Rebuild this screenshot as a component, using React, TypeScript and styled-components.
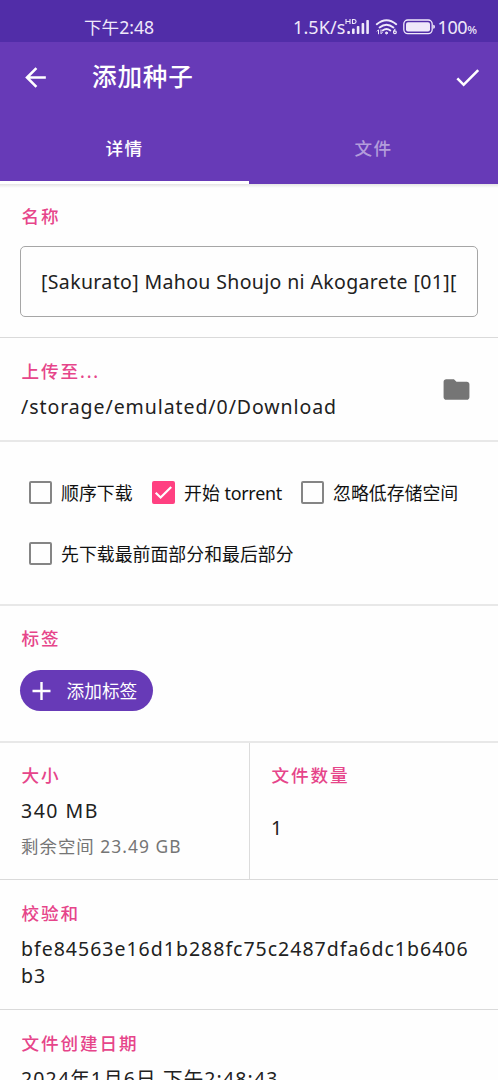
import React from "react";
import styled, { createGlobalStyle } from "styled-components";

const GlobalStyle = createGlobalStyle`
  * { box-sizing: border-box; }
  body {
    margin: 0;
    background: #fefefe;
    font-family: "Noto Sans", "Noto Sans CJK SC", sans-serif;
    color: #212121;
  }
`;

const Screen = styled.div`
  display: flex;
  flex-direction: column;
  width: 498px;
  height: 1080px;
  overflow: hidden;
`;

const StatusBar = styled.div`
  display: flex;
  flex: none;
  align-items: center;
  justify-content: space-between;
  height: 42px;
  padding: 12px 21px 0 84px;
  background: #512da8;
  color: #efe9fa;
  font-size: 18px;
  line-height: 28px;
`;

const Clock = styled.span`
  font-size: 17.6px;
`;

const StatusItems = styled.div`
  display: flex;
  align-items: center;
  height: 28px;
  white-space: nowrap;
`;

const StatusIcons = styled.div`
  display: flex;
  gap: 4px;
  padding: 1px 2px 0 0;
`;

const StatusText = styled.span<{ $spacing?: number }>`
  font-size: 18px;
  letter-spacing: ${(p) => p.$spacing ?? 0}px;
`;

const Percent = styled.small`
  font-size: 11.5px;
  font-weight: 500;
  padding-top: 5px;
`;

const Header = styled.header`
  flex: none;
  height: 142px;
  background: #673ab7;
  color: #fff;
`;

const Toolbar = styled.div`
  display: flex;
  align-items: center;
  height: 70px;
  padding: 0 15px 0 20px;
`;

const Title = styled.h1`
  flex: 1;
  margin: 0 0 0 41px;
  font-size: 24.6px;
  font-weight: 500;
  line-height: 36px;
  letter-spacing: 0.8px;
`;

const Tabs = styled.div`
  display: flex;
  height: 72px;
`;

const Tab = styled.div<{ $active?: boolean }>`
  display: flex;
  flex: 1;
  align-items: center;
  justify-content: center;
  padding-top: 1px;
  border-bottom: 3px solid ${(p) => (p.$active ? "#fff" : "transparent")};
  color: ${(p) => (p.$active ? "#fff" : "#b39ddb")};
  font-size: 17.6px;
  font-weight: 500;
  letter-spacing: 1.5px;
`;

const Section = styled.section<{ $height: number; $top?: number; $thick?: boolean }>`
  flex: none;
  height: ${(p) => p.$height}px;
  padding: ${(p) => p.$top ?? 20}px 20px 0 21px;
  border-bottom: ${(p) => (p.$thick ? "2px solid #e8e8e8" : "1px solid #dadada")};
`;

const Shade = styled.div`
  flex: none;
  height: 4px;
  margin-bottom: -4px;
  background: linear-gradient(#e4e4e4, #fefefe);
`;

const Label = styled.h2`
  margin: 0;
  padding-left: 0.5px;
  color: #e6458a;
  font-size: 17.6px;
  font-weight: 500;
  line-height: 26px;
  letter-spacing: 1.9px;
`;

const Value = styled.p<{ $spacing?: number; $gap?: number }>`
  margin: ${(p) => p.$gap ?? 9}px 0 0;
  font-size: 19.5px;
  line-height: 27px;
  letter-spacing: ${(p) => p.$spacing ?? 1}px;
  white-space: pre;
`;

const Hint = styled.p`
  margin: 9px 0 0;
  color: #757575;
  font-size: 17.4px;
  line-height: 26px;
  letter-spacing: 1.05px;
`;

const Field = styled.div`
  display: flex;
  align-items: center;
  height: 71px;
  margin: 17px 0 0 -1px;
  padding: 0 19px 1px 20px;
  border: 1px solid #a6a6a6;
  border-radius: 5px;
  font-size: 19.5px;
  letter-spacing: 0.36px;
  white-space: nowrap;
  overflow: hidden;
`;

const PathRow = styled.div`
  display: flex;
  justify-content: space-between;
`;

const FolderSlot = styled.div`
  padding: 16px 6px 0 0;
`;

const CheckRow = styled.div`
  display: flex;
  height: 61px;
  padding-left: 8px;
`;

const CheckItem = styled.div<{ $width: number }>`
  display: flex;
  align-items: center;
  gap: 9px;
  width: ${(p) => p.$width}px;
  color: #111;
  font-size: 17.9px;
  line-height: 26px;
  white-space: nowrap;
`;

const Latin = styled.span`
  letter-spacing: -0.25px;
`;

const Box = styled.span<{ $checked?: boolean }>`
  display: grid;
  flex: none;
  place-items: center;
  width: 23px;
  height: 23px;
  border: 2px solid ${(p) => (p.$checked ? "#ff4081" : "#858585")};
  border-radius: 2px;
  background: ${(p) => (p.$checked ? "#ff4081" : "transparent")};
`;

const Chip = styled.button`
  display: flex;
  align-items: center;
  gap: 16px;
  width: 133px;
  height: 41px;
  margin: 19px 0 0 -1px;
  padding: 0 0 0 11.5px;
  border: 0;
  border-radius: 21px;
  background: #673ab7;
  color: #fff;
  font-family: inherit;
  font-size: 17.7px;
  line-height: 26px;
  white-space: nowrap;
`;

const Columns = styled.div`
  display: grid;
  flex: none;
  grid-template-columns: 250px 1fr;
`;

const Column = styled(Section)<{ $divided?: boolean }>`
  border-right: ${(p) => (p.$divided ? "1px solid #dcdcdc" : "0")};
`;

const Signal = () => (
  <svg width="26" height="20" viewBox="0 0 26 20" fill="#efe9fa">
    <path d="M1 1v5M5 1v5M1 3.5h4M7.5 1.5v4h1.6q2-.1 2-2t-2-2z" fill="none" stroke="#efe9fa" strokeWidth="1.1" />
    <rect x="2.3" y="13" width="2.6" height="3" rx=".8" />
    <rect x="7" y="10.5" width="2.6" height="5.5" rx=".8" />
    <rect x="11.8" y="8" width="2.6" height="8" rx=".8" />
    <rect x="16.6" y="5" width="2.6" height="11" rx=".8" />
    <rect x="21.3" y="2" width="2.6" height="14" rx=".8" />
  </svg>
);

const Wifi = () => (
  <svg width="23" height="20" viewBox="0 0 23 20" fill="none" stroke="#efe9fa" strokeWidth="1.9" strokeLinecap="round">
    <path d="M1.8 6.2Q11.5-1.8 21.2 6.2M4.6 9.4q6.9-5.5 13.8 0M7.7 12.4q3.8-2.8 7.6 0" />
    <circle cx="11.5" cy="15" r="1" fill="#efe9fa" strokeWidth="1" />
    <path d="M3.5 15.8v-4l-1.3 1.3M6 11.8v4l1.3-1.3" strokeWidth="1" />
    <path d="M20 11.2l-1.3 2.2" strokeWidth="1.1" />
    <circle cx="19.9" cy="14.3" r="1.4" strokeWidth="1.2" />
  </svg>
);

const Battery = () => (
  <svg width="33" height="18" viewBox="0 0 33 18" fill="none">
    <rect x="1.8" y="2" width="28.4" height="13.6" rx="4" stroke="#efe9fa" strokeWidth="1.3" />
    <rect x="4" y="4.2" width="24" height="9.2" rx="2" fill="#efe9fa" />
    <path d="M31.2 6.8q1.8 0 1.8 2t-1.8 2z" fill="#efe9fa" />
  </svg>
);

const BackIcon = () => (
  <svg width="31" height="31" viewBox="0 0 24 24" fill="#fff">
    <path d="M20 11H7.83l5.59-5.59L12 4l-8 8 8 8 1.41-1.41L7.83 13H20z" />
  </svg>
);

const DoneIcon = () => (
  <svg width="31" height="31" viewBox="0 0 24 24" fill="#fff">
    <path d="M9 16.17 4.83 12l-1.42 1.41L9 19 21 7l-1.41-1.41z" />
  </svg>
);

const FolderIcon = () => (
  <svg width="31" height="31" viewBox="0 0 24 24" fill="#757575">
    <path d="M10 4H4c-1.1 0-1.99.9-1.99 2L2 18c0 1.1.9 2 2 2h16c1.1 0 2-.9 2-2V8c0-1.1-.9-2-2-2h-8z" />
  </svg>
);

const PlusIcon = () => (
  <svg width="19" height="18" viewBox="0 0 19 18" stroke="#fff" strokeWidth="2.4">
    <path d="M9.5 0v18M.5 9h18" />
  </svg>
);

type CheckProps = { label: React.ReactNode; width: number; checked?: boolean };

const Check = ({ label, width, checked }: CheckProps) => (
  <CheckItem $width={width}>
    <Box $checked={checked}>
      {checked && (
        <svg width="19" height="19" viewBox="0 0 19 19" fill="none" stroke="#fff" strokeWidth="2.2">
          <path d="M1.7 9.7l4.9 4.8L17.2 4" />
        </svg>
      )}
    </Box>
    <span>{label}</span>
  </CheckItem>
);

export default function App() {
  return (
    <Screen>
      <GlobalStyle />
      <StatusBar>
        <Clock>下午2:48</Clock>
        <StatusItems>
          <StatusText $spacing={0.1}>1.5K/s</StatusText>
          <StatusIcons>
            <Signal />
            <Wifi />
            <Battery />
          </StatusIcons>
          <StatusText $spacing={-0.4}>100</StatusText>
          <Percent>%</Percent>
        </StatusItems>
      </StatusBar>
      <Header>
        <Toolbar>
          <BackIcon />
          <Title>添加种子</Title>
          <DoneIcon />
        </Toolbar>
        <Tabs>
          <Tab $active>详情</Tab>
          <Tab>文件</Tab>
        </Tabs>
      </Header>
      <Shade />
      <Section $height={154} $top={19}>
        <Label>名称</Label>
        <Field>[Sakurato] Mahou Shoujo ni Akogarete [01][</Field>
      </Section>
      <Section $height={104} $thick>
        <PathRow>
          <div>
            <Label>上传至...</Label>
            <Value $spacing={0.93}>/storage/emulated/0/Download</Value>
          </div>
          <FolderSlot>
            <FolderIcon />
          </FolderSlot>
        </PathRow>
      </Section>
      <Section $height={164} $top={20} $thick>
        <CheckRow>
          <Check label="顺序下载" width={123} />
          <Check label={<>开始 <Latin>torrent</Latin></>} width={149} checked />
          <Check label="忽略低存储空间" width={160} />
        </CheckRow>
        <CheckRow>
          <Check label="先下载最前面部分和最后部分" width={270} />
        </CheckRow>
      </Section>
      <Section $height={137} $top={19} $thick>
        <Label>标签</Label>
        <Chip>
          <PlusIcon />
          添加标签
        </Chip>
      </Section>
      <Columns>
        <Column $height={137} $top={19} $divided>
          <Label>大小</Label>
          <Value $spacing={1.5}>340 MB</Value>
          <Hint>剩余空间 23.49 GB</Hint>
        </Column>
        <Column $height={137} $top={19}>
          <Label>文件数量</Label>
          <Value $gap={26}>1</Value>
        </Column>
      </Columns>
      <Section $height={130}>
        <Label>校验和</Label>
        <Value>{"bfe84563e16d1b288fc75c2487dfa6dc1b6406\nb3"}</Value>
      </Section>
      <Section $height={140}>
        <Label>文件创建日期</Label>
        <Value $spacing={1.15}>2024年1月6日 下午2:48:43</Value>
      </Section>
    </Screen>
  );
}
